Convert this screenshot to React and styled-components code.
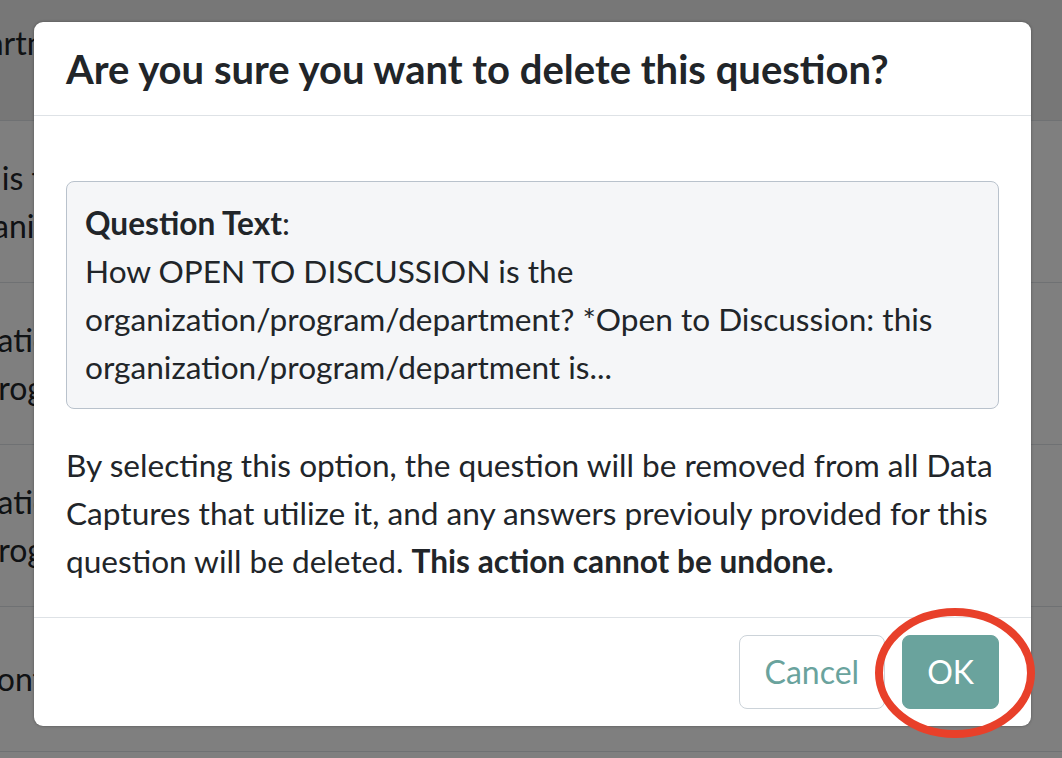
import React from "react";
import styled, { createGlobalStyle } from "styled-components";

const GlobalStyle = createGlobalStyle`
  html, body { margin: 0; padding: 0; }
  body {
    font-family: Lato, "Open Sans", "Liberation Sans", sans-serif;
    color: #212529;
    background: #ffffff;
  }
  * { box-sizing: border-box; }
`;

const Page = styled.div`
  position: relative;
  width: 1062px;
  height: 758px;
  overflow: hidden;
  background: #ffffff;
`;

const Table = styled.div`
  display: flex;
  flex-direction: column;
  font-size: 32px;
  line-height: 48px;
  color: #212529;
`;

const Row = styled.div`
  height: ${(p) => p.$h}px;
  display: flex;
  align-items: center;
  padding-bottom: ${(p) => p.$pb || 0}px;
  background: ${(p) => (p.$head ? "#eeeeee" : "#ffffff")};
  border-bottom: 1px solid #dee2e6;
  flex-shrink: 0;
`;

const Cell = styled.div`
  display: flex;
  flex-direction: column;
`;

const Line = styled.div`
  width: ${(p) => p.$end}px;
  display: flex;
  justify-content: flex-end;
  white-space: nowrap;
`;

const Overlay = styled.div`
  position: absolute;
  inset: 0;
  background: rgba(0, 0, 0, 0.5);
  display: flex;
  align-items: flex-start;
  padding: 22px 0 0 34px;
`;

const Modal = styled.div`
  width: 997px;
  height: 704px;
  background: #ffffff;
  border-radius: 9px;
  box-shadow: 0 0 3px rgba(0, 0, 0, 0.35);
  display: flex;
  flex-direction: column;
  overflow: hidden;
`;

const Header = styled.div`
  padding: 23px 32px 22px 32px;
  border-bottom: 1px solid #dee2e6;
`;

const Title = styled.h5`
  margin: 0;
  font-size: 40px;
  line-height: 48px;
  font-weight: 700;
  color: #212529;
`;

const Body = styled.div`
  flex: 1;
  padding: 65px 32px 32px 32px;
  font-size: 31.6px;
  line-height: 48px;
  color: #212529;
`;

const QuestionBox = styled.div`
  background: #f5f6f8;
  border: 1.5px solid #b9c2cc;
  border-radius: 8px;
  padding: 17px 18px 17px 18px;
  margin-bottom: 32px;
`;

const Para = styled.p`
  margin: 0 -10px 0 0;
`;

const Strong = styled.strong`
  font-weight: 700;
`;

const Footer = styled.div`
  border-top: 1px solid #dee2e6;
  padding: 17px 32px 17px 32px;
  display: flex;
  justify-content: flex-end;
  gap: 17px;
`;

const Button = styled.button`
  font-family: Lato, "Open Sans", "Liberation Sans", sans-serif;
  font-size: 32px;
  line-height: 48px;
  padding: 12px ${(p) => (p.$primary ? 24 : 25)}px;
  border-radius: 8px;
  cursor: pointer;
  border: 1.5px solid ${(p) => (p.$primary ? "#6aa39d" : "#ccd3d9")};
  background: ${(p) => (p.$primary ? "#6aa39d" : "#ffffff")};
  color: ${(p) => (p.$primary ? "#ffffff" : "#6aa39d")};
`;

const Annotation = styled.svg`
  position: absolute;
  left: 874px;
  top: 606px;
  width: 162px;
  height: 134px;
  pointer-events: none;
`;

export default function App() {
  return (
    <>
      <GlobalStyle />
      <Page>
        <Table>
          <Row $h={121} $head $pb={34}>
            <Cell>
              <Line $end={53}>Departm</Line>
            </Cell>
          </Row>
          <Row $h={162}>
            <Cell>
              <Line $end={43}>How OPEN TO DISCUSSION is t</Line>
              <Line $end={49}>organiz</Line>
            </Cell>
          </Row>
          <Row $h={162}>
            <Cell>
              <Line $end={51}>organizatio</Line>
              <Line $end={44}>prog</Line>
            </Cell>
          </Row>
          <Row $h={162}>
            <Cell>
              <Line $end={51}>organizatio</Line>
              <Line $end={44}>prog</Line>
            </Cell>
          </Row>
          <Row $h={145}>
            <Cell>
              <Line $end={44}>cont</Line>
            </Cell>
          </Row>
        </Table>
        <Overlay>
          <Modal>
            <Header>
              <Title>Are you sure you want to delete this question?</Title>
            </Header>
            <Body>
              <QuestionBox>
                <Strong>Question Text</Strong>:
                <br />
                How OPEN TO DISCUSSION is the organization/program/department? *Open to
                Discussion: this organization/program/department is...
              </QuestionBox>
              <Para>
                By selecting this option, the question will be removed from all Data
                Captures that utilize it, and any answers previouly provided for this
                question will be deleted. <Strong>This action cannot be undone.</Strong>
              </Para>
            </Body>
            <Footer>
              <Button type="button">Cancel</Button>
              <Button type="button" $primary>OK</Button>
            </Footer>
          </Modal>
        </Overlay>
        <Annotation viewBox="0 0 162 134">
          <ellipse cx="81" cy="67" rx="76" ry="61" fill="none" stroke="#e8402a" strokeWidth="8" />
        </Annotation>
      </Page>
    </>
  );
}
